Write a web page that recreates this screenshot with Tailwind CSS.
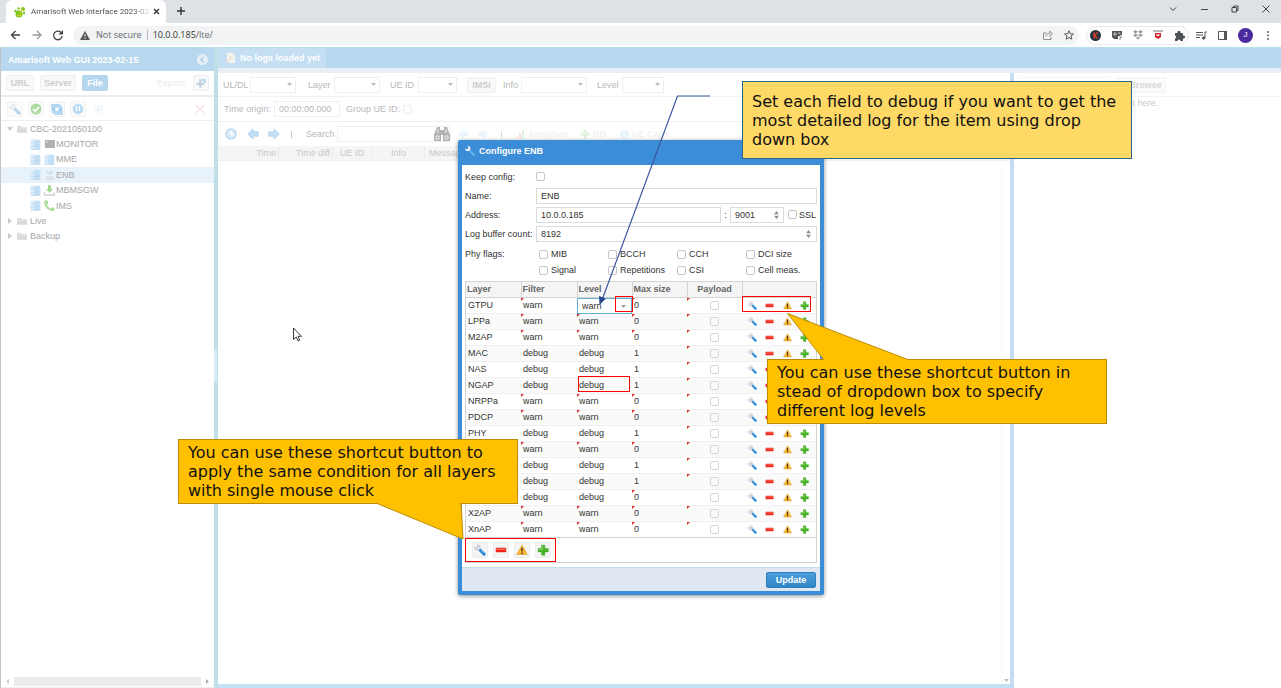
<!DOCTYPE html>
<html lang="en">
<head>
<meta charset="utf-8">
<title>Amarisoft Web Interface</title>
<script src="https://cdn.jsdelivr.net/npm/@tailwindcss/browser@4"></script>
</head>
<body class="relative flex h-screen flex-col overflow-hidden bg-white font-['Liberation_Sans',sans-serif] text-[9px] leading-3 text-[#b8b8b8]">

<svg class="hidden">
  <symbol id="wrench" viewBox="0 0 16 16"><path d="M8 8l5.500 5.500" stroke="#2787d6" stroke-width="4" stroke-linecap="round"/><path d="M1.200 4A3.600 3.600 0 1 0 4.500 1.200L5 4 3.500 5z" fill="#dfe3ec" stroke="#a3abc4" stroke-width=".8"/><path d="M8.500 7.500l5 5" stroke="#7cc0f3" stroke-width="1"/></symbol>
  <symbol id="minus" viewBox="0 0 16 16"><rect x="1" y="5" width="14" height="6" rx="1" fill="#ee2416"/><path d="M2 7h12" stroke="#ff8b7d" stroke-width="1.300"/></symbol>
  <symbol id="warn" viewBox="0 0 16 16"><path d="M8 1.500L15 14H1z" fill="#fbb72b" stroke="#e2a53b" stroke-linejoin="round"/><path d="M8 5v5M8 11.200v2" stroke="#4a3a1c" stroke-width="2"/></symbol>
  <symbol id="plus" viewBox="0 0 16 16"><path d="M6 1.500h4.500V6H15v4.500h-4.500V15H6v-4.500H1.500V6H6z" fill="#44b324" stroke="#3fa326" stroke-width=".6"/><path d="M7.300 3v4.300H3" stroke="#92dc70" fill="none" stroke-width="1.200"/></symbol>
  <symbol id="folder" viewBox="0 0 16 16"><path d="M0 3h6l1.500 2H16v9H0z" fill="#dadada"/><path d="M0 6.500h16" stroke="#efefef"/></symbol>
  <symbol id="server" viewBox="0 0 16 16"><path d="M1 1h14v4H1zM1 6h14v4H1zM1 11h14v4H1z" fill="#c4e0f6"/><path d="M1 1h5v14H1z" fill="#e3f0fb"/><path d="M1 5.500h14M1 10.500h14M1 15h14" stroke="#a8cdea"/></symbol>
  <symbol id="down" viewBox="0 0 8 5"><path d="M0 0h8L4 5z" fill="currentColor"/></symbol>
  <symbol id="left" viewBox="0 0 16 16"><path d="M1 8l7-7v4h7v6H8v4z" fill="#c2dff6" stroke="#a9cfee"/></symbol>
  <symbol id="right" viewBox="0 0 16 16"><path d="M15 8L8 1v4H1v6h7v4z" fill="#c2dff6" stroke="#a9cfee"/></symbol>
  <symbol id="spin" viewBox="0 0 6 10"><path d="M0 4l3-4 3 4zM0 6l3 4 3-4z" fill="#8a8a8a"/></symbol>
  <symbol id="split" viewBox="0 0 16 16"><path d="M7 3v11M2 9h10" stroke="#c5d0d8" stroke-width="3"/><path d="M9 4h4v4" stroke="#b2d8ef" stroke-width="2.500" fill="none"/></symbol>
</svg>

<!-- Browser chrome -->
<header class="flex shrink-0 flex-col text-[#45474b]">
  <div class="flex h-[23px] items-end bg-[#dee1e6] pl-[6px]">
    <div class="flex h-[23px] w-[160px] items-center rounded-t-md bg-white pl-2 pr-1.5">
      <svg class="mr-[5px] size-3 shrink-0" viewBox="0 0 12 12"><g fill="#7fc41c"><circle cx="5" cy="8" r="3.500"/><circle cx="9" cy="3" r="2"/><circle cx="4.500" cy="2.500" r="1.200"/><circle cx="1.500" cy="5" r="1.300"/><circle cx="10" cy="7" r="1.200"/></g><path d="M5 8l4-5M3 9q2 2 4 0" stroke="#e9d929" fill="none"/></svg>
      <span class="flex-1 whitespace-nowrap bg-gradient-to-r from-[#45474b] from-85% to-[#e4e4e6] bg-clip-text font-[Roboto,sans-serif] text-[8px] text-transparent">Amarisoft Web Interface 2023-02</span>
      <button class="ml-1 p-0" aria-label="Close tab"><svg class="size-[7px]" viewBox="0 0 7 7"><path d="M1 1l5 5M6 1L1 6" stroke="#333" stroke-width="1.300"/></svg></button>
    </div>
    <button class="mb-2 ml-[11px]" aria-label="New tab"><svg class="size-2" viewBox="0 0 8 8"><path d="M4 0v8M0 4h8" stroke="#333" stroke-width="1.400"/></svg></button>
    <div class="mb-2.5 ml-auto flex items-center gap-[23px] pr-[11px]">
      <button aria-label="Tab search"><svg class="size-2" viewBox="0 0 8 8"><path d="M1 2.500l3 3 3-3" stroke="#444" fill="none"/></svg></button>
      <button aria-label="Minimise"><svg class="size-2" viewBox="0 0 8 8"><path d="M1 4.500h7" stroke="#444"/></svg></button>
      <button aria-label="Restore"><svg class="size-2" viewBox="0 0 8 8"><path d="M1 2.500h4.500V7H1zM2.500 2.500V1H7v4.500H5.500" stroke="#444" fill="none"/></svg></button>
      <button aria-label="Close"><svg class="size-2" viewBox="0 0 8 8"><path d="M.5.5l7 7M7.500.5l-7 7" stroke="#444"/></svg></button>
    </div>
  </div>
  <div class="flex h-6 items-center bg-white pl-[10px] pr-2">
    <svg class="h-3 w-[54px] shrink-0" viewBox="0 0 54 12" fill="none" stroke-width="1.300"><path d="M10 6H1.500M5.500 2l-4 4 4 4" stroke="#444"/><path d="M22.500 6H31M27 2l4 4-4 4" stroke="#999"/><path d="M51.500 4A4.300 4.300 0 1 0 52.200 7" stroke="#444"/><path d="M53 1v4.500h-4.500z" fill="#444"/></svg>
    <div class="ml-[9px] flex h-[19px] flex-1 items-center rounded-full bg-[#f1f3f4] pl-[7px] pr-[5px] font-['Open_Sans',sans-serif]">
      <svg class="h-[9px] w-[10px]" viewBox="0 0 10 9"><path d="M5 0l5 9H0z" fill="#555"/><path d="M5 3.200v2.500M5 6.800v1.200" stroke="#fff"/></svg>
      <span class="ml-1.5 text-[#66696d]">Not secure</span>
      <span class="mx-[5px] h-[10px] w-px bg-[#b9bbbf]"></span>
      <span class="text-[#333]">10.0.0.185<span class="text-[#66696d]">/lte/</span></span>
      <span class="ml-auto flex items-center gap-[11px]">
        <svg class="size-[10px]" viewBox="0 0 10 10" fill="none" stroke="#777" stroke-width=".8"><path d="M3.500 3H.5v6.500h7.500V7M3 6.500C3 4 5 3.200 7 3.200V1l2.500 2.700L7 6.200V4.500"/></svg>
        <svg class="size-[10px]" viewBox="0 0 10 10"><path d="M5 .8l1.200 2.900 3.200.3L7 6l.8 3.200L5 7.500 2.200 9.200 3 6 .6 4l3.200-.3z" fill="none" stroke="#555"/></svg>
      </span>
    </div>
    <div class="ml-[7px] flex h-[19px] w-[103px] items-center justify-between rounded-full border border-[#e8e8ea] px-[3px]">
      <svg class="size-[11px]" viewBox="0 0 11 11"><circle cx="5.500" cy="5.500" r="5.500" fill="#24353f"/><path d="M4 2.500v6M7.500 2.500l-3 3 3 3" stroke="#dd3a2a" stroke-width="1.400" fill="none"/></svg>
      <svg class="size-[10px]" viewBox="0 0 10 10"><path d="M0 1h10v4H8v1H6v3H2L0 7z" fill="#555"/><path d="M2 3h2v2H2zM6 3h2v1" stroke="#ddd" stroke-width=".8" fill="none"/><path d="M7 6h2v2H8v2" stroke="#888" fill="none"/></svg>
      <svg class="size-[10px]" viewBox="0 0 10 10" fill="#999"><path d="M2.500 0L5 1.700 2.500 3.400 0 1.700zM7.500 0L10 1.700 7.500 3.400 5 1.700zM2.500 3.600L5 5.300 2.500 7 0 5.300zM7.500 3.600L10 5.300 7.500 7 5 5.300zM5 6.500l2 1.500-2 1.500L3 8z"/></svg>
      <svg class="size-[10px]" viewBox="0 0 10 10"><path d="M0 1h10" stroke="#777"/><path d="M2 3h6v4L5 9 2 7z" fill="#d3262d"/><path d="M4 4v1.500h2V4" stroke="#fff" fill="none"/></svg>
      <svg class="size-[11px]" viewBox="0 0 11 11"><path d="M1 3h2.500a1.600 1.600 0 1 1 3 0H9v2.500a1.600 1.600 0 1 1 0 3V11H6.500a1.500 1.500 0 0 0-3 0H1V8.500a1.600 1.600 0 0 0 0-3z" fill="#505356"/></svg>
    </div>
    <div class="ml-[7px] flex items-center gap-[11px]">
      <svg class="h-[9px] w-[11px] shrink-0" viewBox="0 0 11 9" fill="none" stroke="#555"><path d="M0 1.500h7M0 4h7M0 6.500h4M9 7V1h2"/><circle cx="7.700" cy="7" r="1.200" fill="#555"/></svg>
      <svg class="size-[9px] shrink-0" viewBox="0 0 9 9"><path d="M.5.5h8v8h-8z" fill="none" stroke="#555"/><path d="M6 0h3v9H6z" fill="#555"/></svg>
      <span class="flex size-[15px] shrink-0 items-center justify-center rounded-full bg-[#4b2aa0] text-[8px] text-white">J</span>
      <svg class="h-[9px] w-[9px] shrink-0" viewBox="0 0 9 9" fill="#555"><circle cx="4" cy="1" r=".9"/><circle cx="4" cy="4.500" r=".9"/><circle cx="4" cy="8" r=".9"/></svg>
    </div>
  </div>
</header>

<main class="flex min-h-0 flex-1 border-l border-[#c4c4c4]">
  <!-- Navigation -->
  <aside class="flex w-[213px] shrink-0 flex-col">
    <div class="flex h-6 items-center border-t border-[#b5e0e6] bg-[#b8d8ef] pl-[7px] pr-[6px] font-bold text-white">
      <h1 class="flex-1">Amarisoft Web GUI 2023-02-15</h1>
      <button aria-label="Collapse"><svg class="size-[11px]" viewBox="0 0 11 11"><circle cx="5.500" cy="5.500" r="5.500" fill="#e4f0f8"/><path d="M6.500 3L4 5.500 6.500 8" stroke="#a9c9df" stroke-width="1.400" fill="none"/></svg></button>
    </div>
    <div class="flex h-[26px] items-center border-b-2 border-[#ececec] pl-[5px] pr-[5px] font-bold text-[#cdcdcd]">
      <button class="h-4 w-7 rounded-xs border border-[#f0f0f0] bg-[#f9f9f9]">URL</button>
      <button class="ml-1.5 h-4 w-9 whitespace-nowrap rounded-xs border border-[#f0f0f0] bg-[#f9f9f9]">Server</button>
      <button class="ml-1.5 h-4 w-[26px] rounded-xs bg-[#b5d7ed] text-white">File</button>
      <button class="ml-auto mr-1.5 h-4 w-8 text-[#f0f0f0]">Export</button>
      <button class="flex size-4 items-center justify-center rounded-xs border border-[#f0f0f0] bg-[#f9f9f9]" aria-label="Split"><svg class="size-3"><use href="#split"/></svg></button>
    </div>
    <div class="flex h-6 items-center gap-[5px] border-b border-[#efefef] px-[6px]">
      <button class="flex size-4 items-center justify-center rounded-xs border border-[#f3f3f3] bg-[#fbfbfb]" aria-label="Configure"><svg class="size-3 opacity-35"><use href="#wrench"/></svg></button>
      <button class="flex size-4 items-center justify-center rounded-xs border border-[#f3f3f3] bg-[#fbfbfb]" aria-label="Enable"><svg class="size-3" viewBox="0 0 12 12"><circle cx="6" cy="6" r="5.500" fill="#aedca0"/><path d="M3 6l2.200 2.300L9 4" stroke="#fff" stroke-width="1.800" fill="none"/></svg></button>
      <button class="flex size-4 items-center justify-center rounded-xs border border-[#f3f3f3] bg-[#fbfbfb]" aria-label="Refresh"><svg class="size-3" viewBox="0 0 12 12"><path d="M0 1h6a5 5 0 0 1 5.500 4l.5 7H6A5 5 0 0 1 .5 7z" fill="#b4d8f3"/><circle cx="6" cy="6.300" r="1.800" fill="#fff"/><path d="M1.500 6h2.500M8 7h2.500" stroke="#8fc1e8" stroke-width="1.300"/></svg></button>
      <button class="flex size-4 items-center justify-center rounded-xs border border-[#f3f3f3] bg-[#fbfbfb]" aria-label="Pause"><svg class="size-3" viewBox="0 0 12 12"><circle cx="6" cy="6" r="5" fill="#b4d8f3" stroke="#c9e3f6"/><path d="M4.500 3v5M7.500 3v5" stroke="#fff" stroke-width="1.500"/></svg></button>
      <button class="flex size-4 items-center justify-center opacity-25" aria-label="Add"><svg class="size-3"><use href="#split"/></svg></button>
      <button class="ml-auto flex size-4 items-center justify-center" aria-label="Delete"><svg class="size-[10px]" viewBox="0 0 10 10"><path d="M1 1l8 8M9 1L1 9" stroke="#fbe4e4" stroke-width="1.500"/></svg></button>
    </div>
    <ul id="tree" class="flex h-[123px] shrink-0 flex-col text-[#a6a6a6]"></ul>
    <div class="mt-auto flex h-3 items-center gap-[5px] border-b border-[#eee] px-[5px] pb-px">
      <svg class="h-[5px] w-[3px]" viewBox="0 0 3 5"><path d="M3 0v5L0 2.500z" fill="#ccc"/></svg>
      <span class="h-[9px] flex-1 bg-[#ebebeb]"></span>
      <svg class="h-[5px] w-[3px]" viewBox="0 0 3 5"><path d="M0 0v5l3-2.500z" fill="#aaa"/></svg>
    </div>
  </aside>
  <div class="flex w-1 shrink-0 items-center bg-[#c0e0e8]"><span class="mb-1 h-8 w-[3px] bg-[#d9ecf5]"></span></div>

  <div class="flex min-w-0 flex-1 flex-col">
    <div class="flex h-[21px] border-t border-[#b5e0e6] bg-[#b8d8ef]">
      <button class="flex w-[108px] items-center gap-[5px] bg-[#c4def2] pl-[9px] font-bold text-white"><svg class="h-[10px] w-2" viewBox="0 0 8 10"><path d="M0 0h5l3 3v7H0z" fill="#f4f4ee"/><path d="M2 4h4M2 6h4" stroke="#dcd8cd"/><path d="M0 6h2v4H0z" fill="#f0e2d0"/></svg>No logs loaded yet</button>
    </div>
    <div class="h-[5px] bg-[#e9f0f5]"></div>
    <div class="flex min-h-0 flex-1">
      <!-- Log viewer -->
      <section class="flex min-w-0 flex-1 flex-col border-b-4 border-[#c3e0f4]">
        <div class="flex h-6 shrink-0 items-center border-b border-[#f1f1f1] pl-[5px]">
          <label for="f1" class="w-[27px]">UL/DL</label><span class="relative mr-3 w-[46px]"><select id="f1" class="block h-4 w-full appearance-none border border-[#f0f0f0]"></select><svg class="absolute right-1 top-1.5 h-[3px] w-[5px]"><use href="#down"/></svg></span>
          <label for="f2" class="w-[26px]">Layer</label><span class="relative mr-[10px] w-[46px]"><select id="f2" class="block h-4 w-full appearance-none border border-[#f0f0f0]"></select><svg class="absolute right-1 top-1.5 h-[3px] w-[5px]"><use href="#down"/></svg></span>
          <label for="f3" class="w-7">UE ID</label><span class="relative mr-[10px] w-[39px]"><select id="f3" class="block h-4 w-full appearance-none border border-[#f0f0f0]"></select><svg class="absolute right-1 top-1.5 h-[3px] w-[5px]"><use href="#down"/></svg></span>
          <button class="mr-[7px] h-4 w-[29px] rounded-xs border border-[#f0f0f0] bg-[#f9f9f9] font-bold text-[#cdcdcd]">IMSI</button>
          <label for="f4" class="w-[18px]">Info</label><span class="relative mr-[10px] w-[66px]"><select id="f4" class="block h-4 w-full appearance-none border border-[#f0f0f0]"></select><svg class="absolute right-1 top-1.5 h-[3px] w-[5px]"><use href="#down"/></svg></span>
          <label for="f5" class="w-[25px]">Level</label><span class="relative w-[42px]"><select id="f5" class="block h-4 w-full appearance-none border border-[#f0f0f0]"></select><svg class="absolute right-1 top-1.5 h-[3px] w-[5px]"><use href="#down"/></svg></span>
        </div>
        <div class="flex h-[25px] shrink-0 items-center border-b border-[#f1f1f1] pl-1.5">
          <label for="origin" class="w-[50px]">Time origin:</label>
          <input id="origin" class="h-4 w-[66px] border border-[#f0f0f0] pl-1 text-[#b8b8b8]" value="00:00:00.000">
          <label for="group" class="ml-1.5 w-[57px]">Group UE ID:</label>
          <input id="group" type="checkbox" class="size-[9px] appearance-none rounded-xs border border-[#ececec]">
        </div>
        <div class="flex h-6 shrink-0 items-center pl-1.5">
          <button aria-label="Clock" class="mr-[9px]"><svg class="size-[14px]" viewBox="0 0 14 14"><circle cx="7" cy="7" r="5" fill="#dcecf9" stroke="#b8d9f3" stroke-width="1.500"/><path d="M7 4v3.500h3" stroke="#fff" stroke-width="1.300" fill="none"/></svg></button>
          <button aria-label="Previous" class="mr-[9px]"><svg class="size-3"><use href="#left"/></svg></button>
          <button aria-label="Next" class="mr-[11px]"><svg class="size-3"><use href="#right"/></svg></button>
          <span class="mr-[14px] h-[7px] w-px bg-[#c4c4c4]"></span>
          <label for="search" class="w-[31px]">Search</label>
          <span class="flex h-4 w-[114px] items-center border border-[#f0f0f0]"><input id="search" class="min-w-0 flex-1"><svg class="h-[14px] w-4" viewBox="0 0 16 14"><path d="M3 0h3v3h4V0h3l3 8v6H9V8H7v6H0V8z" fill="#b2b2b2"/><path d="M2 9h3v3H2zM11 9h3v3h-3zM4 2v4M12 2v4" stroke="#eee" fill="none"/></svg></span>
          <svg class="ml-[7px] size-[10px] opacity-30"><use href="#left"/></svg>
          <svg class="ml-[10px] size-[10px] opacity-30"><use href="#right"/></svg>
          <span class="ml-[13px] h-[7px] w-px bg-[#d4dbe5]"></span>
          <button class="ml-[10px] flex h-4 w-[58px] items-center gap-[3px] pl-1 font-bold text-[#f1f1f1]"><svg class="size-[9px] shrink-0 opacity-15" viewBox="0 0 9 9"><path d="M0 6h2v3H0z" fill="#ffb400"/><path d="M3 3h2v6H3z" fill="#e33"/><path d="M6 0h2v9H6z" fill="#3a3"/></svg>Analytics</button>
          <button class="ml-1.5 flex h-4 w-[34px] items-center gap-[3px] pl-1 font-bold text-[#f1f1f1]"><svg class="size-[10px] shrink-0 opacity-15"><use href="#plus"/></svg>RB</button>
          <button class="ml-1.5 flex h-4 items-center gap-[3px] whitespace-nowrap pl-1 font-bold text-[#f1f1f1]"><svg class="size-[9px] shrink-0" viewBox="0 0 9 9"><circle cx="4.500" cy="4.500" r="4.500" fill="#e6f3fb"/><path d="M3 3.500q1.500-2 3 0L4.500 5v2" stroke="#fff" fill="none"/></svg>UE Caps</button>
        </div>
        <div class="flex h-[15px] shrink-0 items-center border-b border-[#f0f0f0] bg-[#f5f5f5] text-[#c8c8c8]">
          <span class="w-[61px] border-r border-[#ebebeb] pr-0.5 text-right">Time</span>
          <span class="w-[54px] border-r border-[#ebebeb] pr-0.5 text-right">Time diff</span>
          <span class="w-10 border-r border-[#ebebeb] pl-[7px]">UE ID</span>
          <span class="w-[52px] border-r border-[#ebebeb] text-center">Info</span>
          <span class="pl-1">Message</span>
        </div>
        <div class="flex min-h-0 flex-1 items-end justify-end">
          <span class="flex h-full w-[9px] items-end justify-center border-l border-[#fafafa] pb-0.5"><svg class="h-[3px] w-[5px] text-[#bbb]"><use href="#down"/></svg></span>
        </div>
      </section>
      <div class="w-1 bg-[#c5dcf5]"></div>
      <!-- Details -->
      <section class="w-[267px] shrink-0">
        <div class="flex h-6 items-center border-b border-[#f3f3f3] pl-1.5">
          <input aria-label="File" class="h-4 w-[90px] border border-[#f7f7f7]">
          <button class="ml-[5px] h-4 w-[51px] rounded-xs border border-[#f3f3f3] bg-[#fbfbfb] pl-[10px] font-bold text-[#d6d6d6]">Browse</button>
        </div>
        <p class="w-36 text-right text-[#c8c8c8]">nt here.</p>
      </section>
    </div>
  </div>
</main>

<!-- Configuration dialog -->
<div role="dialog" aria-labelledby="dlg" class="absolute left-[458px] top-[140px] flex w-[366px] flex-col rounded-xs bg-[#3a8dd6] p-1 pt-0 text-[#333] shadow-[0_1px_4px_rgba(0,0,0,0.45)]">
  <h2 id="dlg" class="flex h-[25px] items-center pb-1 pl-0.5 font-bold text-white"><svg class="mr-[3px] size-3" viewBox="0 0 16 16"><path d="M8 8l6 6" stroke="#6db2ea" stroke-width="2.500"/><path d="M1.500 4.500a3.500 3.500 0 1 0 3.500-3.500l1 3-2 1.500z" fill="#f2f2fa"/></svg>Configure ENB</h2>
  <div class="bg-white px-[3px] pb-1 pt-[2px]">
    <form>
      <div class="flex h-[19px] items-center"><label for="keep" class="w-[71px]">Keep config:</label><input id="keep" type="checkbox" class="size-[9px] appearance-none rounded-xs border border-[#c6c6c6]"></div>
      <div class="flex h-[19px] items-center"><label for="name" class="w-[71px]">Name:</label><input id="name" class="h-4 w-[281px] border border-[#dcdcdc] pl-1" value="ENB"></div>
      <div class="flex h-[19px] items-center"><label for="addr" class="w-[71px]">Address:</label><input id="addr" class="h-4 w-[185px] border border-[#dcdcdc] pl-1" value="10.0.0.185"><span class="w-[9px] text-center">:</span><span class="flex h-4 w-[54px] items-center border border-[#dcdcdc] pr-1"><input aria-label="Port" class="min-w-0 flex-1 pl-1" value="9001"><svg class="h-2 w-[5px] shrink-0"><use href="#spin"/></svg></span><input id="ssl" type="checkbox" class="ml-1 size-[9px] shrink-0 appearance-none rounded-xs border border-[#c6c6c6]"><label for="ssl" class="ml-[2px]">SSL</label></div>
      <div class="flex h-[19px] items-center"><label for="count" class="w-[71px] whitespace-nowrap">Log buffer count:</label><span class="flex h-4 w-[281px] items-center border border-[#dcdcdc] pr-[5px]"><input id="count" class="min-w-0 flex-1 pl-1" value="8192"><svg class="h-2 w-[5px]"><use href="#spin"/></svg></span></div>
      <fieldset class="flex pt-[3px]"><legend class="float-left h-4 w-[74px] leading-4">Phy flags:</legend><div id="flags" class="grid flex-1 grid-cols-[69px_69px_69px_1fr]"></div></fieldset>
    </form>
    <div class="mt-[3px] border border-[#d4d4d4]">
      <table class="w-full table-fixed border-collapse">
        <colgroup><col class="w-[55px]"><col class="w-[56px]"><col class="w-[55px]"><col class="w-[55px]"><col class="w-[55px]"><col></colgroup>
        <thead><tr class="h-[15px] border-b border-[#d4d4d4] bg-[#f5f5f5] text-left text-[#666]"><th class="border-r border-[#d4d4d4] p-0 pl-px">Layer</th><th class="border-r border-[#d4d4d4] p-0 pl-px">Filter</th><th class="border-r border-[#d4d4d4] p-0 pl-px">Level</th><th class="border-r border-[#d4d4d4] p-0 pl-px">Max size</th><th class="border-r border-[#d4d4d4] p-0 text-center">Payload</th><th class="p-0"></th></tr></thead>
        <tbody id="rows"></tbody>
      </table>
      <div class="flex h-[25px] items-center gap-[5px] border-t border-[#d4d4d4] pl-1.5">
        <button aria-label="All debug" class="flex size-4 items-center justify-center rounded-xs border border-[#ececec] bg-[#f5f5f5]"><svg class="size-3"><use href="#wrench"/></svg></button>
        <button aria-label="All error" class="flex size-4 items-center justify-center rounded-xs border border-[#ececec] bg-[#f5f5f5]"><svg class="size-3"><use href="#minus"/></svg></button>
        <button aria-label="All warn" class="flex size-4 items-center justify-center rounded-xs border border-[#ececec] bg-[#f5f5f5]"><svg class="size-3"><use href="#warn"/></svg></button>
        <button aria-label="All add" class="flex size-4 items-center justify-center rounded-xs border border-[#ececec] bg-[#f5f5f5]"><svg class="size-3"><use href="#plus"/></svg></button>
      </div>
    </div>
  </div>
  <div class="flex h-6 items-center justify-end border-t border-[#c0dfe8] bg-[#dfe8f2] pr-1"><button class="h-4 w-[50px] rounded-xs border border-[#2f7dbb] bg-gradient-to-b from-[#4a9edb] to-[#2f86c8] font-bold leading-3 text-white">Update</button></div>
</div>

<!-- Highlights and callouts -->
<div class="absolute left-[615px] top-[296px] h-4 w-[18px] border border-[#f00]"></div>
<div class="absolute left-[742px] top-[296px] h-4 w-[69px] border border-[#f00]"></div>
<div class="absolute left-[578px] top-[376px] h-4 w-[52px] border border-[#f00]"></div>
<div class="absolute left-[465px] top-[538px] h-6 w-[91px] border border-[#f00]"></div>

<p class="absolute left-[742px] top-[81px] h-[78px] w-[390px] border border-[#27668a] bg-[#ffd966] px-[9px] pt-[10px] font-['DejaVu_Sans',sans-serif] text-base leading-[19px] text-[#111]">Set each field to debug if you want to get the<br>most detailed log for the item using drop<br>down box</p>
<p class="absolute left-[767px] top-[359px] h-[65px] w-[340px] border border-[#bc8c00] bg-[#ffc000] px-[9px] pt-[3px] font-['DejaVu_Sans',sans-serif] text-base leading-[19px] text-[#111]">You can use these shortcut button in<br>stead of dropdown box to specify<br>different log levels</p>
<p class="absolute left-[178px] top-[439px] h-[65px] w-[340px] border border-[#bc8c00] bg-[#ffc000] px-[9px] pt-[3px] font-['DejaVu_Sans',sans-serif] text-base leading-[19px] text-[#111]">You can use these shortcut button to<br>apply the same condition for all layers<br>with single mouse click</p>

<svg class="pointer-events-none absolute left-0 top-0 h-[688px] w-[1281px]" viewBox="0 0 1281 688" fill="none">
  <path d="M710 96H677.500L602 300" stroke="#3a57a0" stroke-width="1.200"/>
  <path d="M599.500 305l-.5-9 7 2.500z" fill="#27488f"/>
  <path d="M824 360L787.500 313.500 909 360" fill="#ffc000" stroke="#bc8c00"/>
  <path d="M376 503L463 539 461 503" fill="#ffc000" stroke="#bc8c00"/>
  <path d="M293.500 328v11.500l2.700-2.500 1.800 3.800 1.700-.8-1.700-3.700h3.500z" fill="#fff" stroke="#222" stroke-width=".9"/>
</svg>

<script>
const kind = {
  term: '<svg class="size-[10px]" viewBox="0 0 10 10"><path d="M0 1h10v8H0z" fill="#b0b0b0"/><path d="M1 2l2 1.500" stroke="#eee"/></svg>',
  server: '<svg class="size-[11px]"><use href="#server"/></svg>',
  enb: '<svg class="size-[10px]" viewBox="0 0 10 10"><path d="M2 1q1 1.500 0 3M8 1q-1 1.500 0 3M3 4h4M2 7h6v3H2z" stroke="#d3dce1" fill="#e3e7e9"/><circle cx="5" cy="2.500" r="1" fill="#a9cbe0"/></svg>',
  dl: '<svg class="size-[11px]" viewBox="0 0 11 11"><path d="M4 0h3v4h2L5.500 8 2 4h2z" fill="#a3d992"/><path d="M.5 7v3h10V7" stroke="#cfcfcf" stroke-width="1.300" fill="none"/></svg>',
  phone: '<svg class="size-[11px]" viewBox="0 0 11 11"><path d="M1 0l3 1v3L3 5q1 2.500 3.500 3.500L8 7l3 1.500L10 11Q1 11 0 2z" fill="#b0e0a0"/></svg>'
};
const folder = (name, open) => `<li class="flex flex-1 items-center pl-[6px]"><svg class="mr-1 size-[6px]" viewBox="0 0 6 6"><path d="${open ? 'M0 1h6L3 5z' : 'M1 0v6l4-3z'}" fill="#c9c9c9"/></svg><svg class="mr-[3px] size-[10px]"><use href="#folder"/></svg>${name}</li>`;
const leaf = (name, k, on) => `<li class="${on ? 'flex flex-1 items-center bg-[#e8f2fb] pl-[29px]' : 'flex flex-1 items-center pl-[29px]'}"><svg class="mr-[2px] size-[11px]"><use href="#server"/></svg><span class="flex w-[13px] justify-center">${kind[k]}</span>${name}</li>`;
document.getElementById('tree').innerHTML = folder('CBC-2021050100', true) + leaf('MONITOR', 'term') + leaf('MME', 'server') + leaf('ENB', 'enb', true) + leaf('MBMSGW', 'dl') + leaf('IMS', 'phone') + folder('Live') + folder('Backup');

document.getElementById('flags').innerHTML = ['MIB', 'BCCH', 'CCH', 'DCI size', 'Signal', 'Repetitions', 'CSI', 'Cell meas.'].map(f => `<label class="flex h-4 items-center gap-[3px]"><input type="checkbox" class="size-[9px] appearance-none rounded-xs border border-[#c6c6c6]">${f}</label>`).join('');

const mark = '<svg class="absolute left-0 top-0 size-[3px]" viewBox="0 0 3 3"><path d="M0 0h3L0 3z" fill="#d3301c"/></svg>';
const cell = (v, m) => `<td class="relative p-0 pl-[2px]">${m ? mark : ''}${v}</td>`;
const select = '<td class="relative p-0"><select aria-label="Level" class="absolute inset-0 h-4 w-full appearance-none border border-[#5fb0d8] bg-white pl-1"><option>warn</option><option>debug</option></select><svg class="absolute right-[6px] top-[7px] h-[3px] w-[5px] text-[#999]"><use href="#down"/></svg></td>';
const layers = [['GTPU', 'warn', 0], ['LPPa', 'warn', 0], ['M2AP', 'warn', 0], ['MAC', 'debug', 1], ['NAS', 'debug', 1], ['NGAP', 'debug', 1], ['NRPPa', 'warn', 0], ['PDCP', 'warn', 0], ['PHY', 'debug', 1], ['', 'warn', 0], ['', 'debug', 1], ['', 'debug', 1], ['', 'debug', 0], ['X2AP', 'warn', 0], ['XnAP', 'warn', 0]];
document.getElementById('rows').innerHTML = layers.map(([n, l, s], i) => `<tr class="h-4 border-b border-[#f0f0f0] last:border-b-0 even:bg-[#fafafa]">${cell(n)}${cell(l, l === 'warn')}${i ? cell(l, l === 'warn') : select}${cell(s, !s)}<td class="relative p-0">${i === 12 ? '' : mark}<input type="checkbox" aria-label="Payload" class="mx-auto block size-[9px] appearance-none rounded-xs border border-[#d6d6d6]"></td><td class="p-0"><div class="flex justify-between pl-[6px] pr-[7px]">${['wrench', 'minus', 'warn', 'plus'].map(k => `<button class="block" aria-label="${k}"><svg class="size-[9px]"><use href="#${k}"/></svg></button>`).join('')}</div></td></tr>`).join('');
</script>
</body>
</html>
